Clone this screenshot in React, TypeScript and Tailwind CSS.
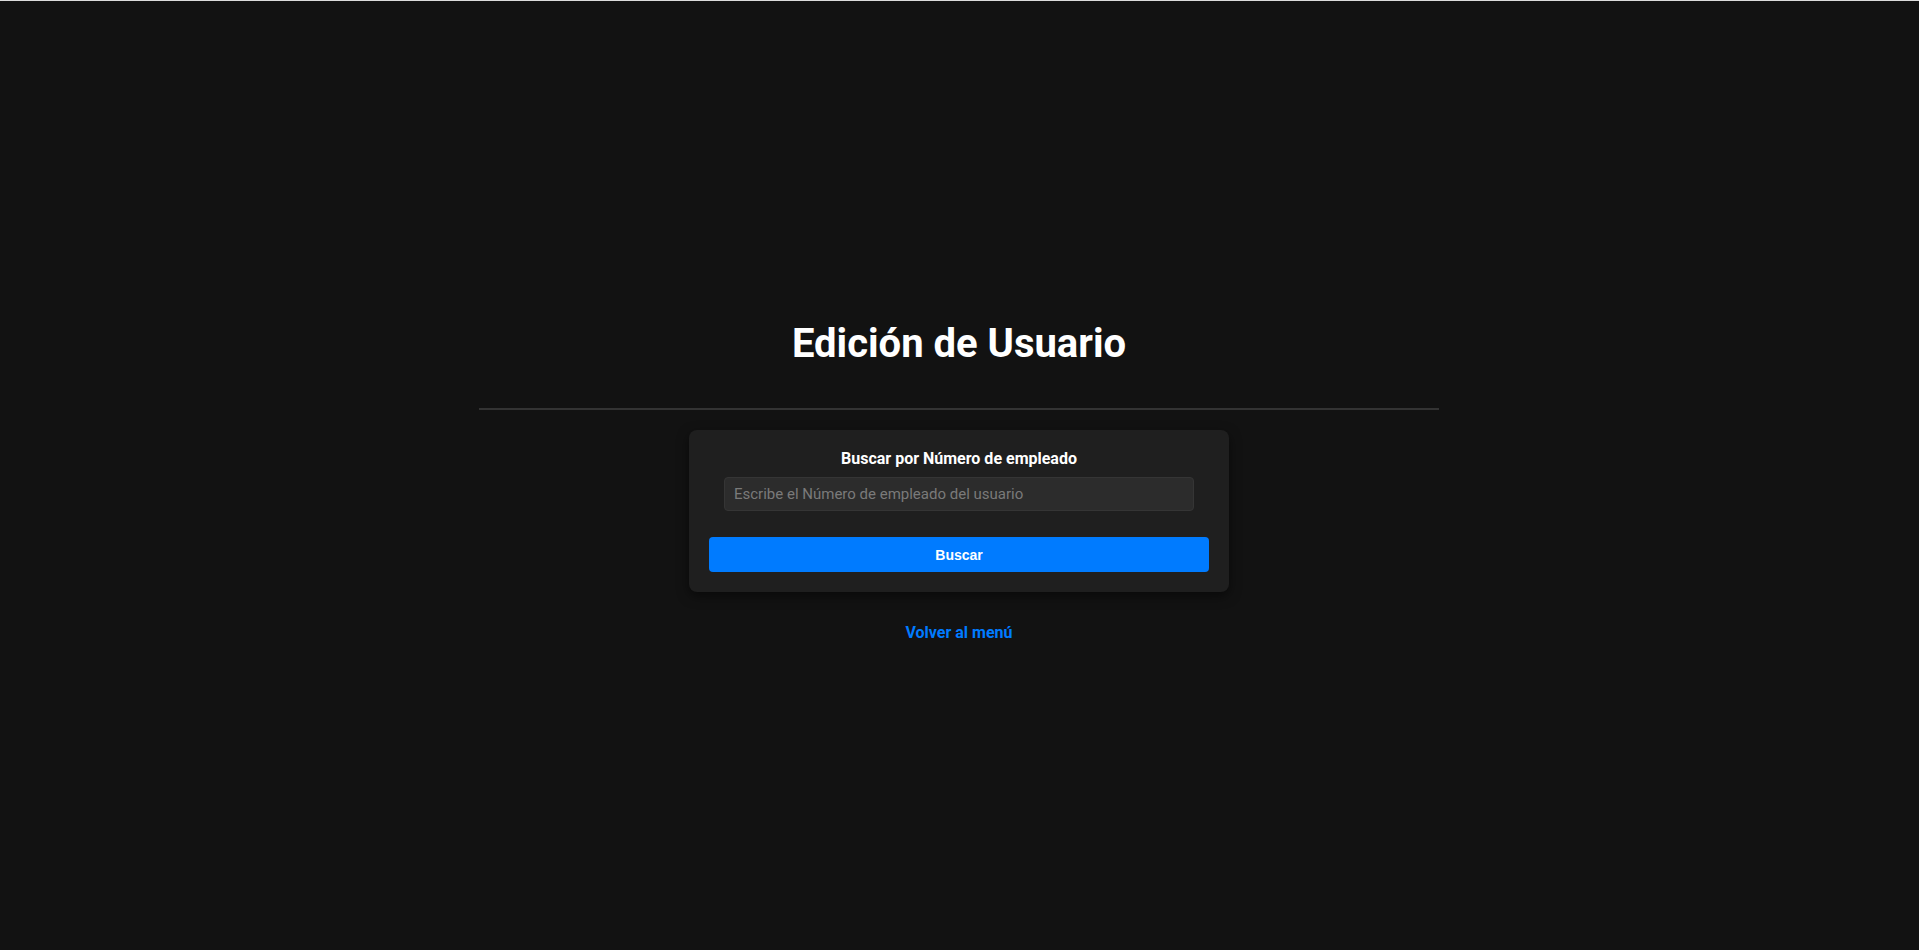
export default function App() {
  return (
    <div
      className="min-h-screen bg-[#121212] border-t border-[#dcdcdc] flex flex-col items-center pt-[319px] pr-px"
      style={{ fontFamily: "Roboto, 'Liberation Sans', sans-serif" }}
    >
      <h1 className="text-[40px] leading-[48px] font-bold text-white">Edición de Usuario</h1>

      <div className="w-[960px] h-[2px] bg-[#333333] mt-[40px]" />

      <div className="mt-[20px] w-[540px] rounded-lg bg-[#1f1f1f] shadow-[0_4px_12px_rgba(0,0,0,0.5)] px-5 pt-[19px] pb-5 flex flex-col items-center">
        <h2 className="text-base leading-[19px] font-bold text-white">Buscar por Número de empleado</h2>
        <input
          type="text"
          placeholder="Escribe el Número de empleado del usuario"
          className="mt-[9px] w-[470px] h-[34px] rounded bg-[#2c2c2c] border border-[#353535] px-[9px] text-[15px] text-white placeholder:text-[#7a7a7a] outline-none"
        />
        <button className="mt-[26px] w-full h-[35px] rounded bg-[#007bff] text-white text-sm font-bold font-['Liberation_Sans',Arial,sans-serif]">
          Buscar
        </button>
      </div>

      <a href="#" className="mt-[29px] text-base font-bold text-[#007bff]">
        Volver al menú
      </a>
    </div>
  )
}
